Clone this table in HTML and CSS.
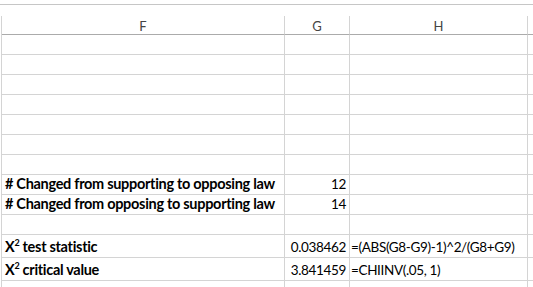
FILE: index.html
```html
<!DOCTYPE html>
<html>
<head>
<meta charset="utf-8">
<link rel="stylesheet" href="styles.css">
</head>
<body>
<div class="topbar"></div>
<div class="sheet">
  <div class="hd">F</div><div class="hd">G</div><div class="hd">H</div><div class="hd rest"></div>

  <div class="c"></div><div class="c"></div><div class="c"></div><div class="c rest"></div>
  <div class="c"></div><div class="c"></div><div class="c"></div><div class="c rest"></div>
  <div class="c"></div><div class="c"></div><div class="c"></div><div class="c rest"></div>
  <div class="c"></div><div class="c"></div><div class="c"></div><div class="c rest"></div>
  <div class="c"></div><div class="c"></div><div class="c"></div><div class="c rest"></div>
  <div class="c"></div><div class="c"></div><div class="c"></div><div class="c rest"></div>
  <div class="c"></div><div class="c"></div><div class="c"></div><div class="c rest"></div>

  <div class="c b"><span>#&nbsp;Changed from supporting to opposing law</span></div><div class="c num"><span>12</span></div><div class="c"></div><div class="c rest"></div>
  <div class="c b"><span>#&nbsp;Changed from opposing to supporting law</span></div><div class="c num"><span>14</span></div><div class="c"></div><div class="c rest"></div>
  <div class="c"></div><div class="c"></div><div class="c"></div><div class="c rest"></div>

  <div class="c b"><span>X<sup>2</sup>&nbsp;test statistic</span></div><div class="c num"><span>0.038462</span></div><div class="c fx"><span>=(ABS(G8-G9)-1)^2/(G8+G9)</span></div><div class="c rest"></div>
  <div class="c b"><span>X<sup>2</sup>&nbsp;critical value</span></div><div class="c num"><span>3.841459</span></div><div class="c fx"><span>=CHIINV(.05, 1)</span></div><div class="c rest"></div>

  <div class="c"></div><div class="c"></div><div class="c"></div><div class="c rest"></div>
</div>
</body>
</html>
```

FILE: styles.css
```css
html, body {
  margin: 0;
  padding: 0;
  background: #ffffff;
  overflow: hidden;
  height: 287px;
}
body {
  font-family: "Lato", "Liberation Sans", sans-serif;
  color: #000;
}
.topbar {
  height: 4px;
  border-bottom: 1px solid #c6c6c6;
  margin-bottom: 11px;
}
.sheet {
  margin-left: 1px;
  border-left: 1px solid #d4d4d4;
  display: grid;
  grid-template-columns: 283px 65px 178px 1fr;
  grid-template-rows: 19px repeat(10, 20px) 23px 23px 20px;
}
.hd {
  box-sizing: border-box;
  border-right: 1px solid #d4d4d4;
  border-bottom: 1px solid #ababab;
  font-size: 13px;
  color: #444;
  display: flex;
  align-items: center;
  justify-content: center;
  padding-top: 1px;
}
.c {
  box-sizing: border-box;
  border-right: 1px solid #d4d4d4;
  border-bottom: 1px solid #d4d4d4;
  font-size: 13.5px;
  letter-spacing: -0.35px;
  display: flex;
  align-items: flex-end;
  padding: 0 3px 1px 3px;
  white-space: nowrap;
  line-height: 18px;
}
.fx {
  padding-left: 1px;
}
.rest {
  border-right: none;
}
.b {
  font-size: 14.5px;
  font-weight: bold;
  letter-spacing: -0.3px;
}
.num {
  justify-content: flex-end;
}
sup {
  font-size: 9px;
  line-height: 0;
  vertical-align: 6px;
}
```
